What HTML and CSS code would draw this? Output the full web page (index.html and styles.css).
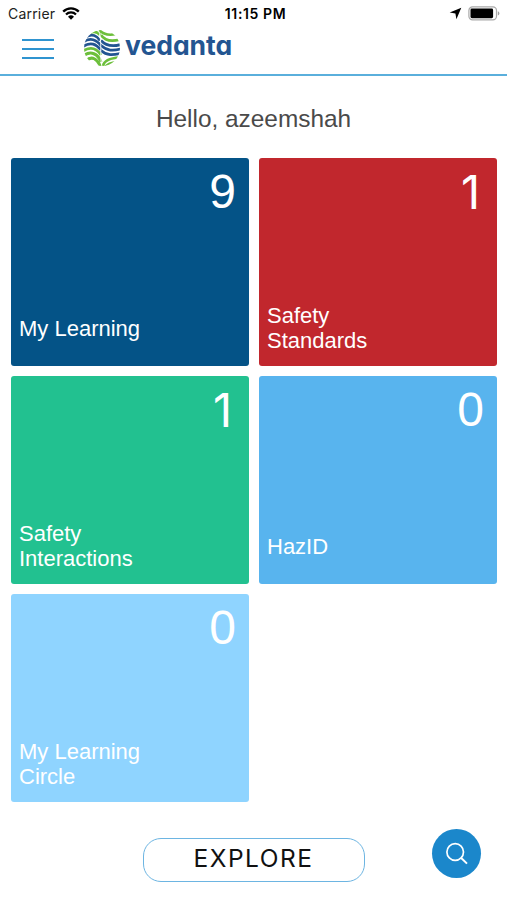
FILE: index.html
```
<!DOCTYPE html>
<html lang="en">
<head>
    <meta charset="UTF-8">
    <meta name="viewport" content="width=device-width, initial-scale=1.0">
    <title>Vedanta</title>
    <link rel="stylesheet" href="styles.css">
</head>
<body>

    <!-- Status bar -->
    <div class="status">
        <div class="carrier">
            <span>Carrier</span>
            <svg class="wifi" width="18" height="13" viewBox="0 0 18 13">
                <path d="M1.2 4.6a11 11 0 0 1 15.6 0M4 7.5a7.1 7.1 0 0 1 10 0" fill="none" stroke="#000" stroke-width="2.3"/>
                <path d="M9 12.8 6 9.7a4.3 4.3 0 0 1 6 0z"/>
            </svg>
        </div>
        <span class="time">11:15 PM</span>
        <div class="indicators">
            <svg width="13" height="13" viewBox="0 0 13 13">
                <path d="M12.3.7 7.4 12.3 6.4 6.6.7 5.6z"/>
            </svg>
            <svg width="32" height="15" viewBox="0 0 32 15">
                <rect x=".9" y=".9" width="27.6" height="12.9" rx="3.6" fill="#fff" stroke="#a9a9a9" stroke-width="1.2"/>
                <rect x="2.5" y="2.6" width="22.6" height="9.6" rx="1.4"/>
                <path d="M29.8 5.2q1.6.6 1.6 2.2t-1.6 2.2z" fill="#a0a0a0"/>
            </svg>
        </div>
    </div>

    <header class="header">
        <button class="menu" aria-label="Menu">
            <span></span>
            <span></span>
            <span></span>
        </button>
        <div class="brand">
            <svg class="globe" width="38" height="38" viewBox="0 0 38 38">
                <clipPath id="disc"><circle cx="19" cy="19" r="18"/></clipPath>
                <g clip-path="url(#disc)" fill="none" stroke-width="2.7">
                    <g stroke="#6cbf3b">
                        <path d="M7 4Q13 1 17 6"/>
                        <path d="M16 1C20 5 25 7 33 5"/>
                        <path d="M18 6C22 12 28 13 37 10.500"/>
                        <path d="M0 22C8 17 14 20 18 26"/>
                        <path d="M0 27C8 21 15 25 18 33" stroke-width="3"/>
                        <path d="M3 32C9 26 14 30 18 38" stroke-width="3"/>
                        <path d="M20 37C21 31 27 29 37 28.500"/>
                        <path d="M22 38Q25 34 34 33"/>
                    </g>
                    <g stroke="#235591">
                        <path d="M3 8C9 4 14 7 17 11.500"/>
                        <path d="M0 13C8 8 13 11 18 16.500"/>
                        <path d="M0 17.500C8 12.500 13 15 18 21"/>
                        <path d="M18 11.500C23 17 29 18 38 15.500"/>
                        <path d="M18 16.500C24 22 30 22 38 20"/>
                        <path d="M18 21.500C24 27 30 26 38 24.500"/>
                    </g>
                    <path d="M15 0C20 12 16 25 19 38" stroke="#fff" stroke-width=".9"/>
                </g>
            </svg>
            <span class="wordmark">vedanta</span>
        </div>
    </header>

    <main>
        <h1 class="greeting">Hello, azeemshah</h1>

        <div class="tiles">
            <div class="tile navy">
                <div class="count">9</div>
                <div class="label">My Learning</div>
            </div>
            <div class="tile red">
                <div class="count one">1</div>
                <div class="label">Safety<br>Standards</div>
            </div>
            <div class="tile green">
                <div class="count one">1</div>
                <div class="label">Safety<br>Interactions</div>
            </div>
            <div class="tile blue">
                <div class="count">0</div>
                <div class="label">HazID</div>
            </div>
            <div class="tile sky">
                <div class="count">0</div>
                <div class="label">My Learning<br>Circle</div>
            </div>
        </div>
    </main>

    <footer class="footer">
        <button class="explore">EXPLORE</button>
        <button class="search" aria-label="Search">
            <svg width="24" height="24" viewBox="0 0 24 24" fill="none" stroke="#fff" stroke-width="1.7">
                <circle cx="10.200" cy="10" r="8.300"/>
                <path d="M16.200 16 22 21.600" stroke-width="2"/>
            </svg>
        </button>
    </footer>

</body>
</html>
```
FILE: styles.css
```
* {
    box-sizing: border-box;
}
body {
    margin: 0;
    height: 900px;
    overflow: hidden;
    background-color: #fff;
    font-family: "Liberation Sans", Arial, sans-serif;
}
button {
    border: none;
    padding: 0;
    background: none;
}
svg {
    display: block;
}

/* Status bar */
.status {
    display: grid;
    grid-template-columns: 1fr auto 1fr;
    align-items: center;
    height: 27px;
    padding: 0 7px 0 8px;
    font-family: Inter, sans-serif;
    font-size: 14px;
}
.carrier {
    display: flex;
    align-items: center;
    gap: 7px;
    color: #222;
    letter-spacing: 0.2px;
}
.time {
    padding-left: 3px;
    font-weight: 600;
    font-size: 14px;
    letter-spacing: 0.6px;
}
.indicators {
    display: flex;
    align-items: center;
    justify-content: flex-end;
    gap: 6px;
}

/* Header */
.header {
    display: flex;
    height: 49px;
    padding-left: 22px;
    border-bottom: 2px solid #5aafdc;
}
.menu {
    display: flex;
    flex-direction: column;
    gap: 7px;
    width: 32px;
    margin-top: 12px;
}
.menu span {
    height: 2px;
    background-color: #2f94d0;
}
.brand {
    display: flex;
    margin-left: 29px;
}
.globe {
    margin-top: 2px;
}
.wordmark {
    margin-left: 4px;
    color: #235591;
    font-family: Inter, sans-serif;
    font-size: 26.5px;
    font-weight: 700;
    font-feature-settings: "cv11";
    line-height: 37px;
}

.greeting {
    margin: 28px 0 0;
    color: #4a4a4a;
    font-size: 24.4px;
    font-weight: 400;
    line-height: 30px;
    text-align: center;
}

/* Tiles */
.tiles {
    display: grid;
    grid-template-columns: 1fr 1fr;
    grid-auto-rows: 208px;
    gap: 10px;
    padding: 24px 10px 0 11px;
}
.tile {
    display: flex;
    flex-direction: column;
    justify-content: space-between;
    padding: 9px 13px 13px 8px;
    border-radius: 3px;
    color: #fff;
}
.count {
    font-size: 48px;
    line-height: 50px;
    text-align: right;
}
.one {
    padding-right: 4px;
    font-family: Inter, sans-serif;
    font-size: 47px;
}
.label {
    display: flex;
    align-items: center;
    height: 50px;
    font-size: 22px;
    line-height: 25px;
}
.navy {
    background-color: #045387;
}
.red {
    background-color: #c1272d;
}
.green {
    background-color: #22c190;
}
.blue {
    background-color: #58b4ee;
}
.sky {
    background-color: #8fd4ff;
}

/* Footer */
.footer {
    display: grid;
    grid-template-columns: 1fr 222px 1fr;
    padding-top: 27px;
}
.explore {
    grid-column: 2;
    height: 44px;
    margin-top: 9px;
    padding-bottom: 4px;
    border: 1.5px solid #6db5e2;
    border-radius: 18px;
    color: #111;
    font-family: Inter, sans-serif;
    font-size: 24.5px;
    letter-spacing: 1.5px;
}
.search {
    display: flex;
    align-items: center;
    justify-content: center;
    justify-self: end;
    width: 49px;
    height: 49px;
    margin-right: 26px;
    border-radius: 50%;
    background-color: #1b87cb;
}
```
